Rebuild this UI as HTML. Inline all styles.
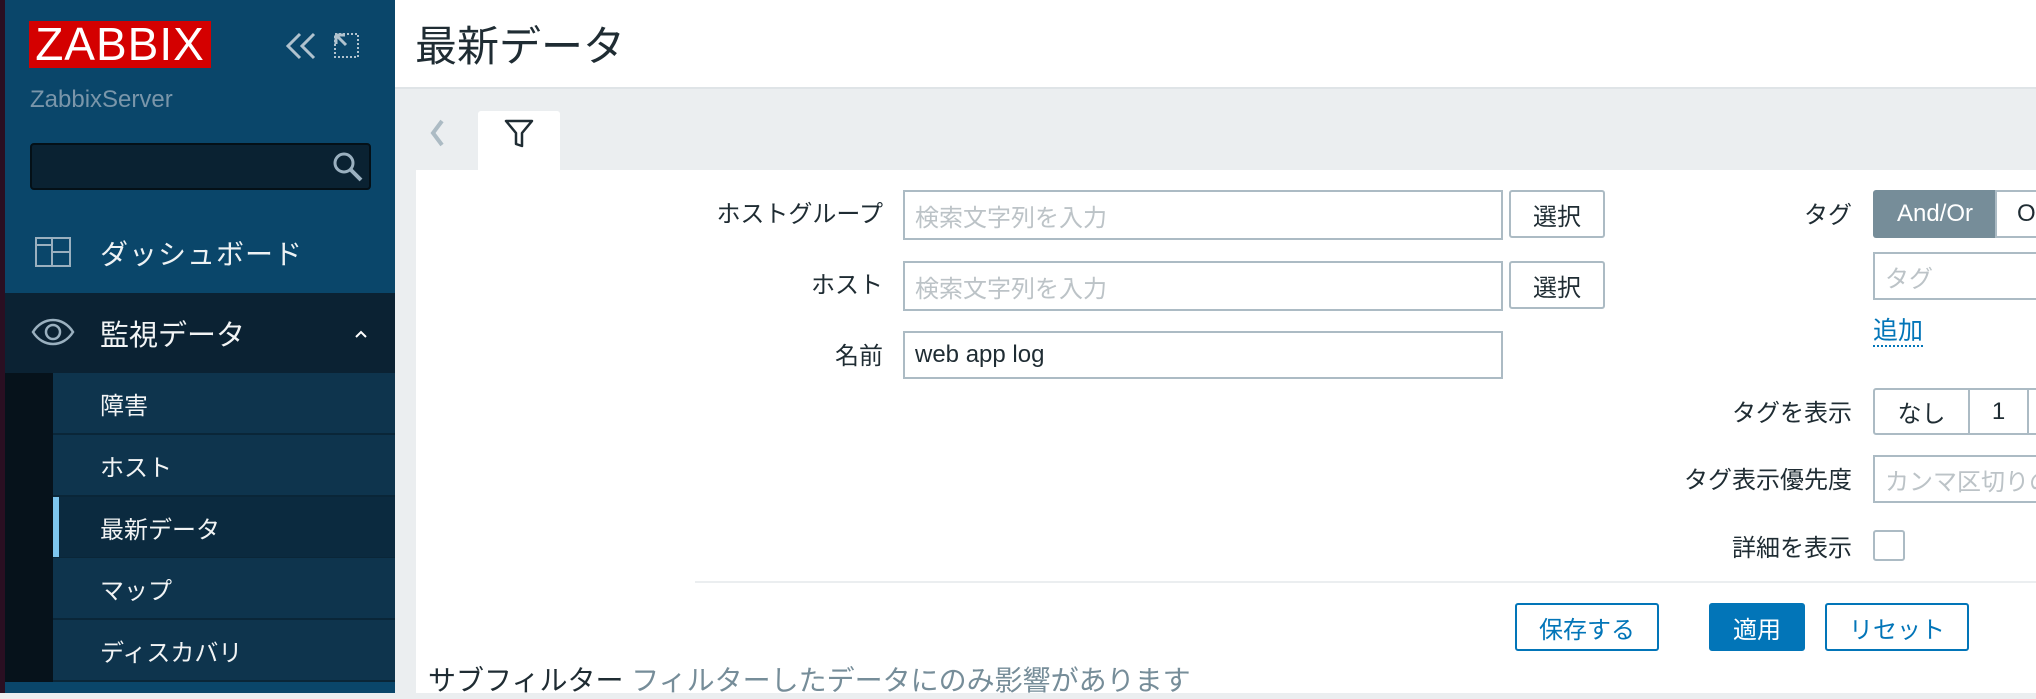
<!DOCTYPE html>
<html><head><meta charset="utf-8"><style>
*{box-sizing:border-box;margin:0;padding:0}
body{width:2036px;height:693px;overflow:hidden;background:#ebeef0;font-family:"Liberation Sans","Noto Sans CJK JP",sans-serif;position:relative;color:#1f2c33}
.a{position:absolute}
.sb{left:5px;top:0;width:390px;height:693px;background:#0a466a}
.lbl{position:absolute;font-size:24px;color:#1f2c33;text-align:right;white-space:nowrap}
.inp{position:absolute;border:2px solid #acbbc4;background:#fff;font-size:24px;color:#bcc3c7;padding-left:10px;display:flex;align-items:center}
.btn{position:absolute;border:2px solid #acbbc4;border-radius:3px;background:#fff;font-size:24px;display:flex;align-items:center;justify-content:center;color:#1f2c33}
.bb{position:absolute;border:2px solid #0275b8;border-radius:3px;background:#fff;color:#0275b8;font-size:24px;display:flex;align-items:center;justify-content:center}
.sub{position:absolute;left:53px;width:342px;height:62px;background:#0e344d;border-bottom:2px solid #0a2638;color:#f2f4f5;font-size:24px;padding-left:47px;display:flex;align-items:center}
</style></head><body>
<div class="a" style="left:0;top:0;width:5px;height:693px;background:#2a0f22"></div>
<div class="a sb"></div>
<div class="a" style="left:29px;top:21px;width:182px;height:47px;background:#d40000;color:#fff;font-size:46px;line-height:47px;text-align:center;letter-spacing:1px">ZABBIX</div>
<svg class="a" style="left:284px;top:31px" width="34" height="30" viewBox="0 0 34 30"><path d="M16 3L4 15l12 12M30 3L18 15l12 12" fill="none" stroke="#b0c2ce" stroke-width="3"/></svg>
<svg class="a" style="left:334px;top:33px" width="26" height="26" viewBox="0 0 26 26"><rect x="1" y="1" width="23" height="23" fill="none" stroke="#b0c2ce" stroke-width="2" stroke-dasharray="2 2"/><path d="M2 2l10 10M2 2h9M2 2v9" stroke="#b0c2ce" stroke-width="3" fill="none"/></svg>
<div class="a" style="left:30px;top:86px;font-size:24px;color:#7a96aa">ZabbixServer</div>
<div class="a" style="left:30px;top:143px;width:341px;height:47px;background:#0a2232;border:2px solid #041017;border-radius:4px"></div>
<svg class="a" style="left:332px;top:151px" width="32" height="32" viewBox="0 0 32 32"><circle cx="12" cy="12" r="9" fill="none" stroke="#9ab0bf" stroke-width="3"/><path d="M18 18l11 11" stroke="#9ab0bf" stroke-width="4"/></svg>
<svg class="a" style="left:35px;top:237px" width="36" height="30" viewBox="0 0 36 30"><rect x="1" y="1" width="34" height="28" fill="none" stroke="#9ab0bf" stroke-width="2"/><path d="M17 1v28M17 15h18M1 8h16" stroke="#9ab0bf" stroke-width="2"/></svg>
<div class="a" style="left:100px;top:233px;font-size:28px;color:#eef2f4;letter-spacing:1px">ダッシュボード</div>
<div class="a" style="left:5px;top:293px;width:390px;height:80px;background:#0b2233"></div>
<svg class="a" style="left:31px;top:316px" width="44" height="32" viewBox="0 0 44 32"><path d="M2 16C12 0 32 0 42 16C32 32 12 32 2 16Z" fill="none" stroke="#9ab0bf" stroke-width="2.5"/><circle cx="22" cy="16" r="7" fill="none" stroke="#9ab0bf" stroke-width="2.5"/></svg>
<div class="a" style="left:100px;top:312px;font-size:29px;color:#f2f4f5">監視データ</div>
<svg class="a" style="left:354px;top:329px" width="14" height="10" viewBox="0 0 14 10"><path d="M2 8l5-5 5 5" fill="none" stroke="#fff" stroke-width="2"/></svg>
<div class="a" style="left:5px;top:373px;width:48px;height:309px;background:#06121b"></div>
<div class="sub" style="top:373px">障害</div>
<div class="sub" style="top:435px">ホスト</div>
<div class="sub" style="top:497px;background:#0b2a3f">最新データ</div>
<div class="a" style="left:53px;top:497px;width:6px;height:60px;background:#7dc6ef"></div>
<div class="sub" style="top:558px">マップ</div>
<div class="sub" style="top:620px">ディスカバリ</div>
<div class="a" style="left:395px;top:0;width:1641px;height:89px;background:#fff;border-bottom:2px solid #dfe4e7"></div>
<div class="a" style="left:415px;top:13px;font-size:42px;color:#1f2c33">最新データ</div>
<svg class="a" style="left:428px;top:118px" width="18" height="30" viewBox="0 0 18 30"><path d="M14 3L5 15l9 12" fill="none" stroke="#acbbc4" stroke-width="4"/></svg>
<div class="a" style="left:478px;top:111px;width:82px;height:62px;background:#fff;border-radius:3px 3px 0 0"></div>
<svg class="a" style="left:504px;top:119px" width="30" height="30" viewBox="0 0 30 30"><path d="M2 2h26L18 14v13l-6-2V14Z" fill="none" stroke="#1f2c33" stroke-width="2.5" stroke-linejoin="round"/></svg>
<div class="a" style="left:416px;top:170px;width:1620px;height:523px;background:#fff"></div>
<div class="lbl" style="right:1153px;top:194px">ホストグループ</div>
<div class="inp" style="left:903px;top:190px;width:600px;height:50px">検索文字列を入力</div>
<div class="btn" style="left:1509px;top:190px;width:96px;height:48px">選択</div>
<div class="lbl" style="right:1153px;top:265px">ホスト</div>
<div class="inp" style="left:903px;top:261px;width:600px;height:50px">検索文字列を入力</div>
<div class="btn" style="left:1509px;top:261px;width:96px;height:48px">選択</div>
<div class="lbl" style="right:1153px;top:336px">名前</div>
<div class="inp" style="left:903px;top:331px;width:600px;height:48px;color:#1f2c33">web app log</div>
<div class="lbl" style="right:184px;top:195px">タグ</div>
<div class="a" style="left:1873px;top:190px;width:124px;height:48px;background:#768d99;border-radius:3px 0 0 3px;color:#fff;font-size:24px;display:flex;align-items:center;justify-content:center">And/Or</div>
<div class="btn" style="left:1995px;top:190px;width:80px;height:48px;justify-content:flex-start;padding-left:20px;border-radius:0">Or</div>
<div class="inp" style="left:1873px;top:252px;width:200px;height:48px">タグ</div>
<div class="a" style="left:1873px;top:317px;font-size:25px;color:#0275b8;border-bottom:2px dotted #0275b8;line-height:28px">追加</div>
<div class="lbl" style="right:184px;top:393px">タグを表示</div>
<div class="btn" style="left:1873px;top:388px;width:97px;height:47px;border-radius:3px 0 0 3px">なし</div>
<div class="btn" style="left:1968px;top:388px;width:61px;height:47px;border-radius:0">1</div>
<div class="btn" style="left:2027px;top:388px;width:50px;height:47px;border-radius:0"></div>
<div class="lbl" style="right:184px;top:460px">タグ表示優先度</div>
<div class="inp" style="left:1873px;top:455px;width:200px;height:48px">カンマ区切りの</div>
<div class="lbl" style="right:184px;top:528px">詳細を表示</div>
<div class="a" style="left:1873px;top:530px;width:32px;height:31px;border:2px solid #acbbc4;border-radius:3px"></div>
<div class="a" style="left:695px;top:581px;width:1341px;height:2px;background:#ebeef0"></div>
<div class="bb" style="left:1515px;top:603px;width:144px;height:48px">保存する</div>
<div class="bb" style="left:1709px;top:603px;width:96px;height:48px;background:#0275b8;color:#fff">適用</div>
<div class="bb" style="left:1825px;top:603px;width:144px;height:48px">リセット</div>
<div class="a" style="left:428px;top:659px;font-size:28px;white-space:nowrap;color:#1f2c33">サブフィルター <span style="color:#768d99">フィルターしたデータにのみ影響があります</span></div>
</body></html>
